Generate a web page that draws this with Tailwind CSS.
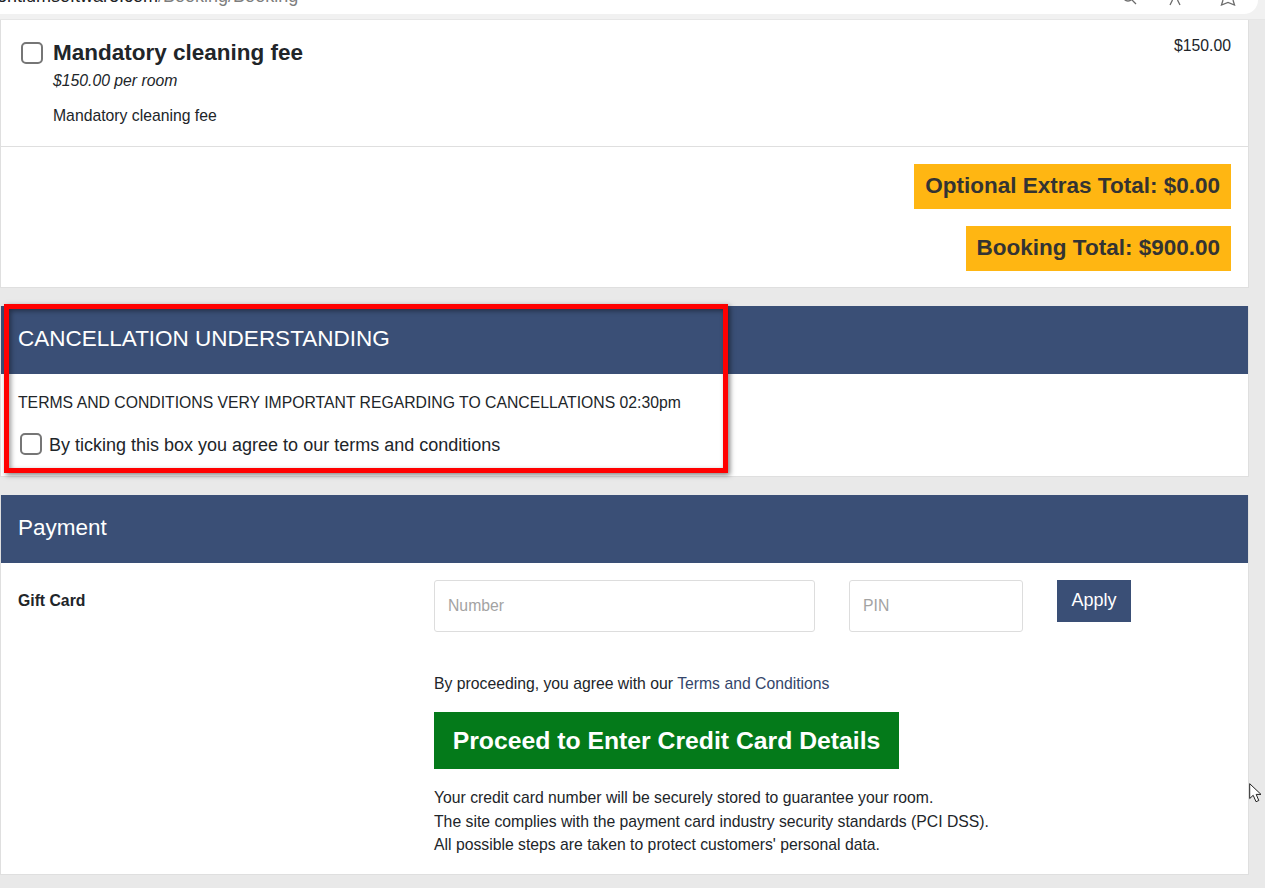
<!DOCTYPE html>
<html>
<head>
<meta charset="utf-8">
<title>Booking</title>
<script src="https://cdn.jsdelivr.net/npm/@tailwindcss/browser@4"></script>
</head>
<body class="relative h-[888px] overflow-hidden bg-[#e9e9e9] font-['Liberation_Sans',Arial,sans-serif] text-[15.75px] text-[#212529]">

<!-- browser bar, cut off at the top -->
<div class="h-5 bg-[#f1f1f1] border-b border-[#e6e6e6]">
  <div class="h-[14px] w-[1258px] bg-white rounded-br-[16px] overflow-hidden flex justify-between">
    <div class="mt-[-16px] ml-[-3px] text-[18px] leading-[24px] whitespace-nowrap text-[#202124]">entiumsoftware.com<span class="text-[#7d7d7d]">/Booking/Booking</span></div>
    <div class="flex items-start pr-[22px] text-[#6b6b6b]">
      <svg class="w-4 h-4 mt-[-11px]" viewBox="0 0 16 16" fill="none" stroke="currentColor" stroke-width="1.3"><circle cx="7" cy="7" r="5"/><path d="M10.6 10.6 15 15"/></svg>
      <svg class="w-4 h-[6px] ml-[30px]" viewBox="0 0 16 6" fill="none" stroke="currentColor" stroke-width="1.3"><path d="M5.5 0 3 5M10.5 0 13 5"/></svg>
      <svg class="w-4 h-[6px] ml-[37px]" viewBox="0 0 16 6" fill="none" stroke="currentColor" stroke-width="1.3"><path d="M3 0 1.5 5 8 2.5 14.5 5 13 0"/></svg>
    </div>
  </div>
</div>

<div class="w-[1249px]">
  <!-- extras -->
  <div class="bg-white border border-[#dfdfdf] h-[268px] border-t-0">
    <div class="h-[127px] border-b border-[#dfdfdf] flex justify-between pl-[20px] pr-[17px]">
      <div class="flex">
        <div class="w-[22px] h-[22px] mt-[22px] border-2 border-[#767676] rounded-[5px] bg-white"></div>
        <div class="ml-[10px]">
          <h3 class="text-[22.5px] font-bold leading-[28px] mt-[19px]">Mandatory cleaning fee</h3>
          <p class="italic leading-[20px] mt-[4px]">$150.00 per room</p>
          <p class="leading-[20px] mt-[15px]">Mandatory cleaning fee</p>
        </div>
      </div>
      <div class="leading-[20px] mt-[16px]">$150.00</div>
    </div>
    <div class="flex flex-col items-end pr-[17px] pt-[17px] gap-[17px]">
      <div class="bg-[#ffb612] px-[11px] h-[45px] pb-[2px] flex items-center text-[22.5px] font-bold text-[#333333]">Optional Extras Total: $0.00</div>
      <div class="bg-[#ffb612] px-[11px] h-[45px] pb-[2px] flex items-center text-[22.5px] font-bold text-[#333333]">Booking Total: $900.00</div>
    </div>
  </div>

  <!-- cancellation -->
  <div class="mt-[18px] bg-white border-x border-b border-[#dfdfdf] h-[171px]">
    <div class="h-[68px] bg-[#3a4f76] text-white text-[22.5px] pl-[17px] pb-[2px] flex items-center">CANCELLATION UNDERSTANDING</div>
    <p class="pl-[17px] mt-[19px] leading-[20px]">TERMS AND CONDITIONS VERY IMPORTANT REGARDING TO CANCELLATIONS 02:30pm</p>
    <div class="flex items-center pl-[19px] mt-[20px]">
      <div class="w-[22px] h-[22px] border-2 border-[#767676] rounded-[5px] bg-white"></div>
      <span class="ml-[7px] text-[18px] leading-[22px] relative top-[1px]">By ticking this box you agree to our terms and conditions</span>
    </div>
  </div>

  <!-- payment -->
  <div class="mt-[18px] bg-white border-x border-b border-[#dfdfdf] h-[380px]">
    <div class="h-[68px] bg-[#3a4f76] text-white text-[22.5px] pl-[17px] pb-[2px] flex items-center">Payment</div>
    <div class="flex pl-[17px] pt-[17px]">
      <div class="w-[416px] font-bold leading-[42px]">Gift Card</div>
      <input class="w-[381px] h-[52px] border border-[#dddddd] rounded-[3px] px-[13px] placeholder:text-[#a3a3a3]" placeholder="Number">
      <input class="ml-[34px] w-[174px] h-[52px] border border-[#dddddd] rounded-[3px] px-[13px] placeholder:text-[#a3a3a3]" placeholder="PIN">
      <button class="ml-[34px] w-[74px] h-[42px] pb-[2px] bg-[#3a4f76] text-white text-[18px]">Apply</button>
    </div>
    <div class="ml-[433px]">
      <p class="mt-[42px] leading-[20px]">By proceeding, you agree with our <a href="#" class="text-[#34466b]">Terms and Conditions</a></p>
      <button class="block mt-[18px] w-[465px] h-[57px] bg-[#047a1a] text-white text-[24.75px] font-bold">Proceed to Enter Credit Card Details</button>
      <p class="mt-[17px] leading-[23.5px]">Your credit card number will be securely stored to guarantee your room.<br>The site complies with the payment card industry security standards (PCI DSS).<br>All possible steps are taken to protect customers' personal data.</p>
    </div>
  </div>
</div>

<!-- annotation drawn over the page -->
<div class="absolute left-[4px] top-[304px] w-[724px] h-[169px] border-[5px] border-[#ff0000] shadow-[2px_2px_5px_rgba(0,0,0,0.5),inset_2px_2px_5px_rgba(0,0,0,0.4)] pointer-events-none"></div>

<!-- mouse pointer -->
<svg class="absolute left-[1249px] top-[783px] w-[14px] h-[20px]" viewBox="0 0 14 20"><path d="M.7.7V15.5L4.2 12.3 7 18.7 9.8 17.5 7.2 11.4H12Z" fill="white" stroke="#222" stroke-width="1"/></svg>

</body>
</html>
